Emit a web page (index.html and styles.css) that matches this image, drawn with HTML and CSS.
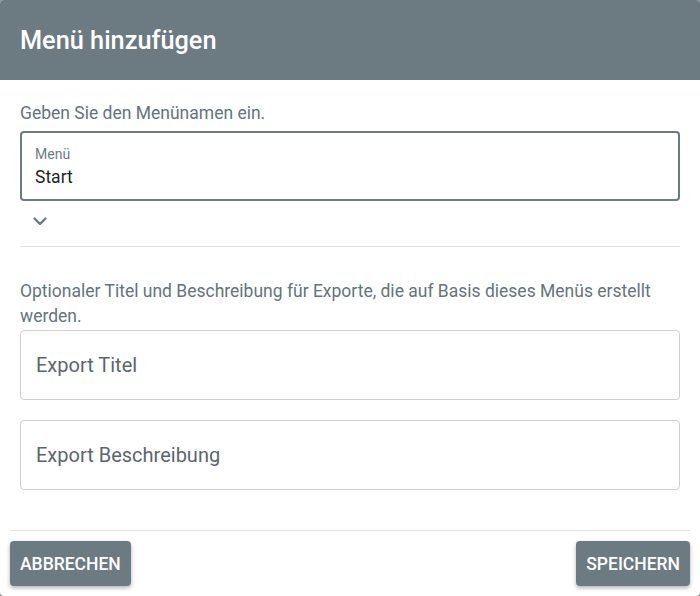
FILE: index.html
```html
<!DOCTYPE html>
<html lang="de">
<head>
<meta charset="utf-8">
<title>Menü hinzufügen</title>
<link rel="stylesheet" href="styles.css">
</head>
<body>
<div class="dialog">
  <header class="dialog-header">
    <h1 class="dialog-title">Menü hinzufügen</h1>
  </header>
  <main class="dialog-body">
    <p class="hint">Geben Sie den Menünamen ein.</p>
    <div class="field field-active">
      <span class="field-label">Menü</span>
      <span class="field-value">Start</span>
    </div>
    <div class="chevron-row">
      <svg class="chevron" width="16" height="10" viewBox="0 0 16 10"><path d="M2.5 2.5 L8 8 L13.5 2.5" fill="none" stroke="#6c7b82" stroke-width="2.4" stroke-linecap="round" stroke-linejoin="round"/></svg>
    </div>
    <hr class="divider">
    <p class="hint hint-multi">Optionaler Titel und Beschreibung für Exporte, die auf Basis dieses Menüs erstellt werden.</p>
    <div class="field field-empty"><span class="placeholder">Export Titel</span></div>
    <div class="field field-empty field-gap"><span class="placeholder">Export Beschreibung</span></div>
  </main>
  <footer class="dialog-footer">
    <button class="btn">ABBRECHEN</button>
    <button class="btn">SPEICHERN</button>
  </footer>
</div>
</body>
</html>
```
FILE: styles.css
```css
html, body {
  margin: 0;
  padding: 0;
  background: #8a8f92;
  font-family: Roboto, "Liberation Sans", Arial, sans-serif;
}
.dialog {
  width: 700px;
  height: 596px;
  background: #ffffff;
  border-radius: 4px;
  overflow: hidden;
  display: flex;
  flex-direction: column;
}
.dialog-header {
  height: 80px;
  background: #6c7b82;
  display: flex;
  align-items: center;
  padding: 0 20px;
  box-sizing: border-box;
}
.dialog-title {
  margin: 0;
  color: #ffffff;
  font-size: 25.3px;
  font-weight: 500;
}
.dialog-body {
  padding: 0 20px;
  flex: 1;
}
.hint {
  margin: 23px 0 8px;
  font-size: 17.5px;
  line-height: 20px;
  color: #64747b;
}
.hint-multi {
  margin: 32px 0 1px;
  line-height: 25px;
}
.field {
  box-sizing: border-box;
  height: 70px;
  border-radius: 4px;
  display: flex;
  flex-direction: column;
  justify-content: center;
  padding: 0 15px;
}
.field-active {
  border: 2px solid #6c7b82;
  padding: 2px 13px 0;
  height: 70px;
}
.field-label {
  font-size: 14px;
  color: #6c7b82;
  line-height: 17px;
}
.field-value {
  font-size: 17.5px;
  color: #1f1f1f;
  line-height: 22px;
  margin-top: 3px;
}
.field-empty {
  border: 1px solid #cfcfcf;
}
.field-gap {
  margin-top: 20px;
}
.placeholder {
  font-size: 20px;
  color: #5a666c;
}
.chevron-row {
  height: 45px;
  display: flex;
  align-items: flex-start;
  padding-left: 12px;
  padding-top: 15px;
  box-sizing: border-box;
}
.divider {
  margin: 0;
  border: 0;
  border-top: 1px solid #e2e2e2;
}
.dialog-footer {
  margin: 0 10px;
  border-top: 1px solid #e2e2e2;
  padding: 10px 0 10px;
  display: flex;
  justify-content: space-between;
  align-items: flex-start;
  height: 66px;
  box-sizing: border-box;
}
.btn {
  background: #6c7b82;
  color: #ffffff;
  border: 0;
  border-radius: 4px;
  height: 45px;
  padding: 0 10px;
  font-family: Roboto, "Liberation Sans", Arial, sans-serif;
  font-size: 17.5px;
  font-weight: 500;
  box-shadow: 0 2px 4px rgba(0,0,0,0.3);
}
```
